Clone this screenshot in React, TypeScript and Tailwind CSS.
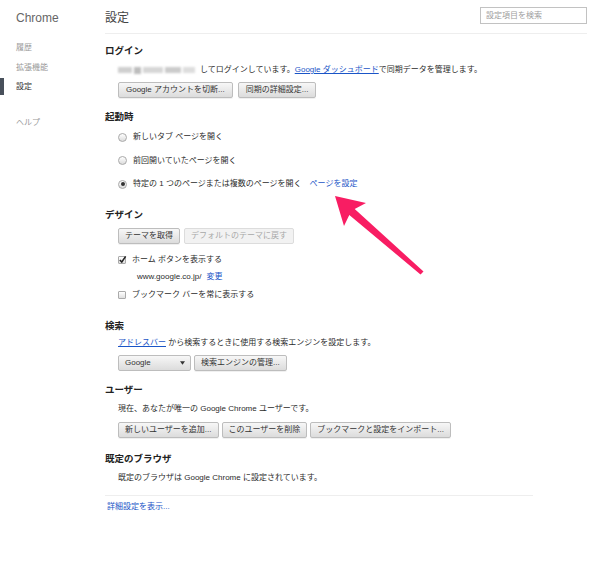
import React from 'react';
import clsx from 'clsx';

const Btn: React.FC<{ children: React.ReactNode; disabled?: boolean; className?: string }> = ({
  children,
  disabled,
  className,
}) => (
  <button
    className={clsx(
      'h-[16px] px-[6px] rounded-[2px] border text-[8px] leading-none whitespace-nowrap',
      disabled
        ? 'border-[#dcdcdc] bg-[#f2f2f2] text-[#a8a8a8]'
        : 'border-[#bdbdbd] bg-gradient-to-b from-[#f7f7f7] to-[#dcdcdc] text-[#333] shadow-[0_1px_0_rgba(0,0,0,0.06)]',
      className
    )}
  >
    {children}
  </button>
);

const Radio: React.FC<{ checked?: boolean; label: React.ReactNode }> = ({ checked, label }) => (
  <div className="flex items-center h-[14px] gap-[6px]">
    <span className="w-[9px] h-[9px] rounded-full border border-[#a9a9a9] bg-gradient-to-b from-white to-[#dcdcdc] flex items-center justify-center">
      {checked && <span className="w-[4px] h-[4px] rounded-full bg-[#333]" />}
    </span>
    <span>{label}</span>
  </div>
);

const Check: React.FC<{ checked?: boolean; label: React.ReactNode }> = ({ checked, label }) => (
  <div className="flex items-center h-[14px] gap-[6px]">
    <span className="w-[8px] h-[8px] rounded-[1px] border border-[#aaa] bg-gradient-to-b from-white to-[#e0e0e0] relative">
      {checked && (
        <svg viewBox="0 0 10 10" className="absolute -left-[1px] -top-[2px] w-[9px] h-[9px]">
          <path d="M2 5.5 L4.2 7.8 L8.5 1.5" fill="none" stroke="#222" strokeWidth="1.7" />
        </svg>
      )}
    </span>
    <span>{label}</span>
  </div>
);

const Heading: React.FC<{ children: React.ReactNode; className?: string }> = ({ children, className }) => (
  <h3 className={clsx('text-[9.5px] font-bold leading-[14px] text-[#222]', className)}>{children}</h3>
);

const Link: React.FC<{ children: React.ReactNode; underline?: boolean }> = ({ children, underline }) => (
  <a className={clsx('text-[#1a55c7]', underline && 'underline')}>{children}</a>
);

export default function App() {
  return (
    <div className="relative flex w-[600px] h-[581px] bg-white text-[#2b2b2b] font-['Liberation_Sans','Noto_Sans_CJK_JP',sans-serif] overflow-hidden">
      {/* Sidebar */}
      <nav className="w-[105px] shrink-0">
        <div className="pl-[16px] pt-[10px] text-[12px] leading-[16px] text-[#666]">Chrome</div>
        <ul className="mt-[12px] text-[8px] leading-[14px] text-[#9a9a9a]">
          <li className="pl-[16px] h-[20px] flex items-center">履歴</li>
          <li className="pl-[16px] h-[20px] flex items-center">拡張機能</li>
          <li className="relative pl-[16px] h-[18px] flex items-center text-[#333]">
            <span className="absolute left-0 top-0 w-[4px] h-[17px] bg-[#48505b]" />
            設定
          </li>
          <li className="pl-[16px] mt-[17px] h-[20px] flex items-center">ヘルプ</li>
        </ul>
      </nav>

      {/* Main */}
      <main className="flex-1 pr-[13px]">
        <header className="h-[34px] flex items-center justify-between border-b border-[#eeeeee]">
          <h1 className="text-[12px] leading-[16px] text-[#444] mt-[2px]">設定</h1>
          <div className="w-[107px] h-[17px] border border-[#c2c2c2] flex items-center pl-[5px] text-[8px] text-[#a0a0a0] -mt-[2px]">
            設定項目を検索
          </div>
        </header>

        {/* ログイン */}
        <section className="mt-[10px]">
          <Heading>ログイン</Heading>
          <div className="pl-[13px] text-[8px] leading-[14px]">
            <div className="mt-[5px] flex items-center">
              <span className="flex items-center gap-[2px] w-[82px] blur-[1.2px]">
                <span className="w-[14px] h-[6px] bg-[#cfcfcf]" />
                <span className="w-[7px] h-[7px] bg-[#bdbdbd]" />
                <span className="w-[20px] h-[6px] bg-[#d6d6d6]" />
                <span className="w-[16px] h-[6px] bg-[#cbcbcb]" />
                <span className="w-[12px] h-[6px] bg-[#dddddd]" />
              </span>
              <span>
                してログインしています。<Link underline>Google ダッシュボード</Link>で同期データを管理します。
              </span>
            </div>
            <div className="mt-[5px] flex gap-[5px]">
              <Btn className="px-[7px]">Google アカウントを切断...</Btn>
              <Btn className="px-[7px]">同期の詳細設定...</Btn>
            </div>
          </div>
        </section>

        {/* 起動時 */}
        <section className="mt-[12px]">
          <Heading>起動時</Heading>
          <div className="pl-[13px] text-[8px] leading-[14px] mt-[6px] flex flex-col gap-[9.5px]">
            <Radio label="新しいタブ ページを開く" />
            <Radio label="前回開いていたページを開く" />
            <Radio
              checked
              label={
                <>
                  特定の 1 つのページまたは複数のページを開く<span className="ml-[8px]"><Link>ページを設定</Link></span>
                </>
              }
            />
          </div>
        </section>

        {/* デザイン */}
        <section className="mt-[17px]">
          <Heading>デザイン</Heading>
          <div className="pl-[13px] text-[8px] leading-[14px]">
            <div className="mt-[6px] flex gap-[4px]">
              <Btn>テーマを取得</Btn>
              <Btn disabled>デフォルトのテーマに戻す</Btn>
            </div>
            <div className="mt-[9px]">
              <Check checked label="ホーム ボタンを表示する" />
            </div>
            <div className="mt-[3px] pl-[19px] h-[14px] flex items-center gap-[5px]">
              <span>www.google.co.jp/</span>
              <Link>変更</Link>
            </div>
            <div className="mt-[4px]">
              <Check label="ブックマーク バーを常に表示する" />
            </div>
          </div>
        </section>

        {/* 検索 */}
        <section className="mt-[17px]">
          <Heading>検索</Heading>
          <div className="pl-[13px] text-[8px] leading-[14px]">
            <div className="mt-[3px]">
              <Link underline>アドレスバー</Link> から検索するときに使用する検索エンジンを設定します。
            </div>
            <div className="mt-[5px] flex gap-[3px]">
              <button className="h-[16px] w-[73px] pl-[6px] pr-[5px] rounded-[2px] border border-[#bdbdbd] bg-gradient-to-b from-[#f7f7f7] to-[#dcdcdc] text-[8px] leading-none text-[#333] flex items-center justify-between">
                <span>Google</span>
                <svg viewBox="0 0 6 4" className="w-[5px] h-[4px]">
                  <path d="M0 0 L6 0 L3 4 Z" fill="#333" />
                </svg>
              </button>
              <Btn>検索エンジンの管理...</Btn>
            </div>
          </div>
        </section>

        {/* ユーザー */}
        <section className="mt-[12px]">
          <Heading>ユーザー</Heading>
          <div className="pl-[13px] text-[8px] leading-[14px]">
            <div className="mt-[5px]">現在、あなたが唯一の Google Chrome ユーザーです。</div>
            <div className="mt-[6px] flex gap-[3px]">
              <Btn>新しいユーザーを追加...</Btn>
              <Btn>このユーザーを削除</Btn>
              <Btn>ブックマークと設定をインポート...</Btn>
            </div>
          </div>
        </section>

        {/* 既定のブラウザ */}
        <section className="mt-[14px] w-[428px] border-b border-[#eeeeee] pb-[10px]">
          <Heading>既定のブラウザ</Heading>
          <div className="pl-[13px] text-[8px] leading-[14px] mt-[5px]">
            既定のブラウザは Google Chrome に設定されています。
          </div>
        </section>

        <div className="mt-[4px] pl-[2px] text-[8px] leading-[14px]">
          <Link>詳細設定を表示...</Link>
        </div>
      </main>

      {/* Annotation arrow */}
      <svg className="absolute inset-0 w-[600px] h-[581px] pointer-events-none" viewBox="0 0 600 581">
        <polygon
          points="335,196 366,203 354.7,209 423.5,271.5 420.5,274.5 349.3,215 344,226"
          fill="#f81d63"
        />
      </svg>
    </div>
  );
}
